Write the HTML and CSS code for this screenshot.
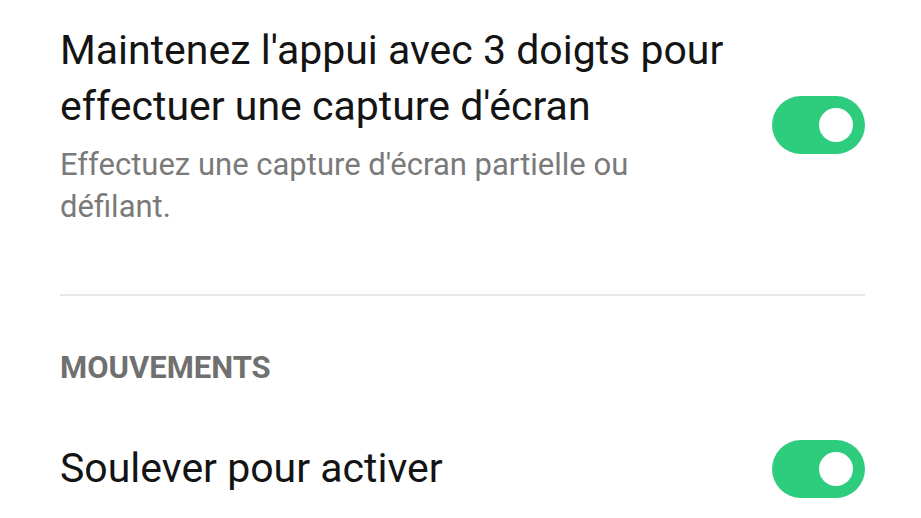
FILE: index.html
```html
<!DOCTYPE html>
<html lang="fr">
<head>
<meta charset="utf-8">
<title>Paramètres</title>
<link rel="stylesheet" href="styles.css">
</head>
<body>
  <main class="settings">
    <div class="setting">
      <div class="setting-text">
        <div class="setting-title">Maintenez l'appui avec 3 doigts pour effectuer une capture d'écran</div>
        <div class="setting-desc">Effectuez une capture d'écran partielle ou défilant.</div>
      </div>
      <span class="switch is-on" role="switch" aria-checked="true"><span class="switch-knob"></span></span>
    </div>

    <hr class="divider">

    <h2 class="section-label">MOUVEMENTS</h2>

    <div class="setting setting-single">
      <div class="setting-text">
        <div class="setting-title">Soulever pour activer</div>
      </div>
      <span class="switch is-on" role="switch" aria-checked="true"><span class="switch-knob"></span></span>
    </div>
  </main>
</body>
</html>
```

FILE: styles.css
```css
* {
  box-sizing: border-box;
}

html, body {
  margin: 0;
  background: #ffffff;
  font-family: Roboto, "Noto Sans", "Liberation Sans", sans-serif;
}

.settings {
  width: 921px;
  height: 518px;
  overflow: hidden;
  padding: 22px 56px 0 60px;
}

.setting {
  display: flex;
  align-items: center;
  gap: 20px;
}

.setting-text {
  flex: 1;
  min-width: 0;
}

.setting-title {
  font-size: 41px;
  line-height: 56px;
  color: #141414;
  max-width: 690px;
}

.setting-desc {
  margin-top: 10px;
  font-size: 31px;
  line-height: 42px;
  color: #7a7a7a;
  max-width: 640px;
}

/* on/off switch: green track, white knob on the right when on */
.switch {
  flex: none;
  position: relative;
  width: 93px;
  height: 58px;
  border-radius: 29px;
  background: #2ecd7e;
}

.switch-knob {
  position: absolute;
  top: 12px;
  right: 12px;
  width: 34px;
  height: 34px;
  border-radius: 50%;
  background: #ffffff;
}

.divider {
  margin: 66px 0 0;
  border: 0;
  height: 2px;
  background: #e8e8e8;
}

.section-label {
  margin: 52px 0 0;
  font-size: 31px;
  line-height: 40px;
  font-weight: 700;
  color: #707070;
}

.setting-single {
  margin-top: 50px;
}

.setting-single .switch {
  margin-top: 2px;
}
```
